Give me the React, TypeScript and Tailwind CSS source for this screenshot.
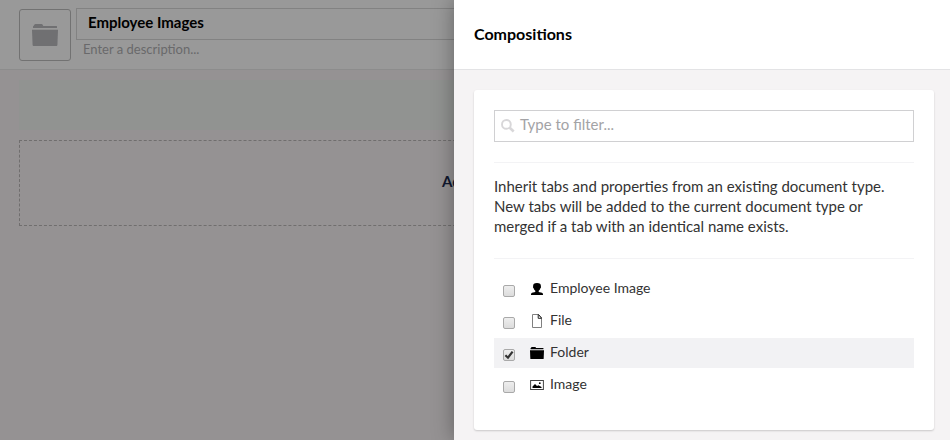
import React from "react";

type Item = { label: string; icon: React.ReactNode; checked?: boolean };

const FolderShape = ({ className }: { className: string }) => (
  <svg viewBox="0 0 26 22" className={className} fill="currentColor" preserveAspectRatio="none">
    <path d="M1 4V2.5Q1 2 1.5 2L2.5 .5Q2.8 0 3.5 0H9.5Q10.2 0 10.5.5L11.3 2H24.5Q25 2 25 2.5V4Z" />
    <path d="M0 5.8H26L25.4 21Q25.3 22 24.5 22H1.5Q.7 22 .6 21Z" />
  </svg>
);

const items: Item[] = [
  {
    label: "Employee Image",
    icon: (
      <svg viewBox="0 0 14 14" className="size-[14px]">
        <path d="M7 1C4.2 1 3 2.2 3.1 4.2L3 5.6L3.6 6.2C3.9 7.4 4.5 8.2 5.3 8.8V10L2 10.8Q.9 11.3 .9 13H13.1Q13.1 11.3 12 10.8L8.7 10V8.8C9.5 8.2 10.1 7.4 10.4 6.2L11 5.6L10.9 4.2C11 2.2 9.8 1 7 1Z" />
      </svg>
    ),
  },
  {
    label: "File",
    icon: (
      <svg viewBox="0 0 14 14" className="size-[14px]" fill="none" strokeWidth="1">
        <path d="M2.5 .5H8.5L11.5 4V13.5H2.5Z" stroke="#808080" />
        <path d="M8.2 .5V4.3H11.7M8.5 .5L11.5 4" stroke="#222" />
      </svg>
    ),
  },
  { label: "Folder", checked: true, icon: <FolderShape className="h-[12px] w-[14px]" /> },
  {
    label: "Image",
    icon: (
      <svg viewBox="0 0 14 14" className="size-[14px]">
        <rect x=".6" y="2.5" width="12.8" height="9" fill="none" stroke="#444" />
        <path d="M2.5 10V8.5L5 6L7 8L8.5 7.2L11.5 9V10Z" />
        <circle cx="9.8" cy="5.2" r=".9" />
      </svg>
    ),
  },
];

function Checkbox({ checked }: { checked?: boolean }) {
  return (
    <span className="mt-[3px] ml-[9px] flex size-[12px] shrink-0 items-center justify-center rounded-[2px] border border-[#a9a9a9] bg-linear-to-b from-[#eeeeee] to-[#dcdcdc]">
      {checked && (
        <svg viewBox="0 0 10 10" className="size-[10px]" fill="none" stroke="#333" strokeWidth="2.2">
          <path d="M1.4 5.2L4 7.7L8.6 1.6" />
        </svg>
      )}
    </span>
  );
}

export default function App() {
  return (
    <div className="flex h-[440px] w-[950px] overflow-hidden bg-[#959293] font-[Lato,sans-serif] text-[15px] text-black">
      <div className="w-[454px] shrink-0 overflow-hidden">
        <header className="flex h-[70px] w-[496px] border-b border-[#8c8c8c] bg-[#999999] pt-[9px] pl-[19px]">
          <div className="flex size-[52px] items-center justify-center rounded-[3px] border border-[#727272] text-[#707072]">
            <FolderShape className="h-[22px] w-[26px]" />
          </div>
          <div className="-mt-px ml-[5px] flex-1">
            <div className="flex h-8 items-center border border-[#828282] pl-[11px] text-[15px] font-bold">
              <span className="-mt-[4px]">Employee Images</span>
            </div>
            <div className="pl-[7px] text-[13px] leading-[18px] text-[#69696b]">Enter a description...</div>
          </div>
        </header>
        <main className="w-[496px] pt-[10px] pl-[19px]">
          <div className="h-[50px] bg-[#919391]" />
          <div className="mt-[10px] flex h-[86px] items-center border border-dashed border-[#706e6e] pl-[422px] text-[15px] font-bold text-[#10182f]">
            <span className="-mt-[4px]">Add</span>
          </div>
        </main>
      </div>

      <aside className="relative w-[496px] shrink-0 bg-[#f5f3f4] shadow-[0_0_20px_rgba(0,0,0,0.35)]">
        <div className="flex h-[70px] items-center border-b border-[#e3e3e5] bg-white pl-5 text-[16px] font-bold">
          <span className="-mt-px">Compositions</span>
        </div>
        <section className="mt-5 ml-5 h-[340px] w-[460px] rounded-[3px] bg-white px-5 pt-5 shadow-[0_1px_2px_rgba(0,0,0,0.18)]">
          <div className="flex h-8 items-center border border-[#d0d0d2] pl-[6px] text-[#a3a3a6]">
            <svg viewBox="0 0 14 14" className="size-[14px]" fill="none" stroke="#d8d7d9">
              <circle cx="5.4" cy="5.4" r="4.4" strokeWidth="1.9" />
              <path d="M8.7 8.7L12.7 12.5" strokeWidth="2.6" />
            </svg>
            <span className="-mt-[4px] ml-[5px]">Type to filter...</span>
          </div>
          <p className="mt-5 border-y border-[#f3f3f5] pt-[13px] pb-[22px] text-[15px] leading-5 text-[#333333]">
            Inherit tabs and properties from an existing document type.
            <br />
            New tabs will be added to the current document type or
            <br />
            merged if a tab with an identical name exists.
          </p>
          <ul className="mt-[15px] flex flex-col gap-[2px]">
            {items.map((it) => (
              <li key={it.label} className={"flex h-[30px] items-center " + (it.checked ? "bg-[#f2f2f4]" : "")}>
                <Checkbox checked={it.checked} />
                <span className="ml-[15px] flex w-[14px] items-center justify-center">{it.icon}</span>
                <span className="-mt-[4px] ml-[6px] text-[14px] text-[#333333]">{it.label}</span>
              </li>
            ))}
          </ul>
        </section>
      </aside>
    </div>
  );
}
